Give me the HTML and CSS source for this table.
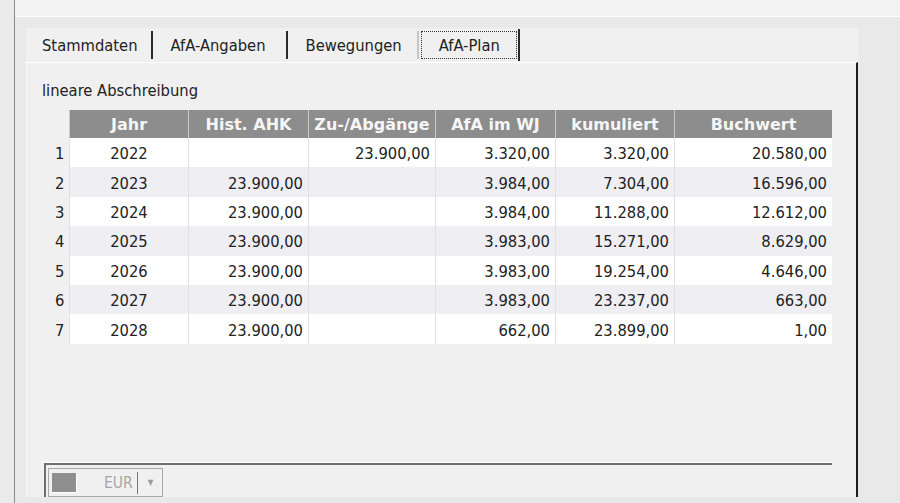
FILE: index.html
```html
<!DOCTYPE html>
<html lang="de">
<head>
    <meta charset="UTF-8">
    <title>AfA-Plan</title>
    <link rel="stylesheet" href="styles.css">
</head>
<body>
    <div class="window">
        <div class="side"></div>
        <div class="main">
            <div class="topbar"></div>
            <div class="workspace">
                <div class="tabctl">
                    <div class="tabs">
                        <div class="tab">Stammdaten</div>
                        <div class="tab">AfA-Angaben</div>
                        <div class="tab">Bewegungen</div>
                        <div class="tab active"><span class="focus">AfA-Plan</span></div>
                    </div>
                    <div class="panel">
                        <div class="caption">lineare Abschreibung</div>
                        <table class="plan">
                            <thead>
                                <tr>
                                    <th class="nr"></th>
                                    <th class="c-jahr">Jahr</th>
                                    <th class="c-ahk">Hist. AHK</th>
                                    <th class="c-zu">Zu-/Abgänge</th>
                                    <th class="c-afa">AfA im WJ</th>
                                    <th class="c-kum">kumuliert</th>
                                    <th class="c-buch">Buchwert</th>
                                </tr>
                            </thead>
                            <tbody>
                                <tr><td class="nr">1</td><td class="year">2022</td><td></td><td>23.900,00</td><td>3.320,00</td><td>3.320,00</td><td>20.580,00</td></tr>
                                <tr><td class="nr">2</td><td class="year">2023</td><td>23.900,00</td><td></td><td>3.984,00</td><td>7.304,00</td><td>16.596,00</td></tr>
                                <tr><td class="nr">3</td><td class="year">2024</td><td>23.900,00</td><td></td><td>3.984,00</td><td>11.288,00</td><td>12.612,00</td></tr>
                                <tr><td class="nr">4</td><td class="year">2025</td><td>23.900,00</td><td></td><td>3.983,00</td><td>15.271,00</td><td>8.629,00</td></tr>
                                <tr><td class="nr">5</td><td class="year">2026</td><td>23.900,00</td><td></td><td>3.983,00</td><td>19.254,00</td><td>4.646,00</td></tr>
                                <tr><td class="nr">6</td><td class="year">2027</td><td>23.900,00</td><td></td><td>3.983,00</td><td>23.237,00</td><td>663,00</td></tr>
                                <tr><td class="nr">7</td><td class="year">2028</td><td>23.900,00</td><td></td><td>662,00</td><td>23.899,00</td><td>1,00</td></tr>
                            </tbody>
                        </table>
                        <div class="footer">
                            <div class="combo">
                                <span class="swatch"></span>
                                <span class="currency">EUR</span>
                                <span class="caret"></span>
                                <span class="arrow">&#9660;</span>
                            </div>
                        </div>
                    </div>
                </div>
            </div>
        </div>
    </div>
</body>
</html>
```

FILE: styles.css
```css
body {
    margin: 0;
    font-family: "DejaVu Sans Condensed", "DejaVu Sans", sans-serif;
    font-stretch: condensed;
    font-size: 16.4px;
    color: #222;
    background-color: #e7e7e7;
}

.window {
    display: flex;
    height: 503px;
    overflow: hidden;
}

.side {
    width: 14px;
    background-color: #ebebeb;
    border-right: 1px solid #8a8a8a;
}

.main {
    flex: 1;
    display: flex;
    flex-direction: column;
}

.topbar {
    height: 16px;
    background-color: #f3f3f3;
    border-bottom: 1px solid #fff;
}

.workspace {
    flex: 1;
    display: flex;
    padding: 11px 0 6px 11px;
    background-color: #e9e9e9;
}

.tabctl {
    width: 832px;
    display: flex;
    flex-direction: column;
}

/* tab strip */
.tabs {
    height: 34px;
    display: flex;
    align-items: center;
    padding-left: 10px;
    background-color: #f0f0f0;
}

.tab {
    height: 28px;
    line-height: 30px;
    padding: 0 13px 0 6px;
    border-right: 2px solid #2a2a2a;
    margin-right: 12px;
}

.tab:nth-child(2) {
    padding-right: 20px;
}

.tab:nth-child(3) {
    border-right-color: #c4c4c4;
    padding-right: 15px;
    margin-right: 2px;
}

.tab.active {
    height: 32px;
    padding: 0;
    margin: 0;
    display: flex;
    align-items: center;
}

.focus {
    display: block;
    height: 26px;
    line-height: 28px;
    padding: 0 16px 0 17px;
    border: 1px dotted #333;
    margin-right: 1px;
}

/* content */
.panel {
    flex: 1;
    display: flex;
    flex-direction: column;
    background-color: #f0f0f0;
    border-top: 1px solid #fff;
    border-left: 1px solid #f8f8f8;
    border-right: 2px solid #1e1e1e;
    padding-left: 15px;
}

.caption {
    padding-top: 18px;
    line-height: 20px;
    margin-bottom: 9px;
}

.plan {
    margin-left: 3px;
    border-collapse: collapse;
    table-layout: fixed;
    width: 787px;
}

.plan th {
    height: 28px;
    padding: 0;
    background-color: #8d8d8d;
    color: #f6f6f6;
    font-family: "DejaVu Sans", sans-serif;
    font-weight: bold;
    font-stretch: normal;
    font-size: 16px;
    border-left: 1px solid #c9c9c9;
}

.plan th.nr {
    background-color: #f0f0f0;
    border-left: none;
}

.plan td {
    height: 29.4px;
    padding: 3px 5px 0 0;
    box-sizing: border-box;
    text-align: right;
    border-left: 1px solid #e1e1e1;
    line-height: 20px;
}

.plan tbody tr:nth-child(odd) td {
    background-color: #fff;
}

.plan tbody tr:nth-child(even) td {
    background-color: #eeeef3;
}

.plan td.nr {
    background-color: #f0f0f0 !important;
    border-left: none;
    text-align: left;
    padding-left: 10px;
}

.plan td.year {
    text-align: center;
    padding-right: 0;
}

.nr { width: 24px; }
.c-jahr { width: 118px; }
.c-ahk { width: 119px; }
.c-zu { width: 126px; }
.c-afa { width: 119px; }
.c-kum { width: 118px; }
.c-buch { width: 157px; }

/* bottom toolbar */
.footer {
    margin-top: auto;
    margin-left: 2px;
    width: 788px;
    height: 34px;
    border-top: 2px solid #6e6e6e;
    border-left: 2px solid #6e6e6e;
    box-shadow: 0 -1px 0 #fff;
    padding: 3px 0 0 2px;
    box-sizing: border-box;
}

.combo {
    width: 115px;
    height: 29px;
    box-sizing: border-box;
    border: 1px solid #a9a9a9;
    display: flex;
    align-items: center;
    padding-left: 3px;
}

.swatch {
    width: 24px;
    height: 19px;
    background-color: #8f8f8f;
    border-right: 1px solid #fff;
    border-bottom: 1px solid #fff;
}

.currency {
    margin-left: 27px;
    color: #a6a6a6;
    font-size: 15.5px;
}

.caret {
    width: 1px;
    height: 22px;
    background-color: #777;
    margin-left: 4px;
}

.arrow {
    margin-left: 10px;
    font-size: 8px;
    color: #9a9a9a;
}
```
